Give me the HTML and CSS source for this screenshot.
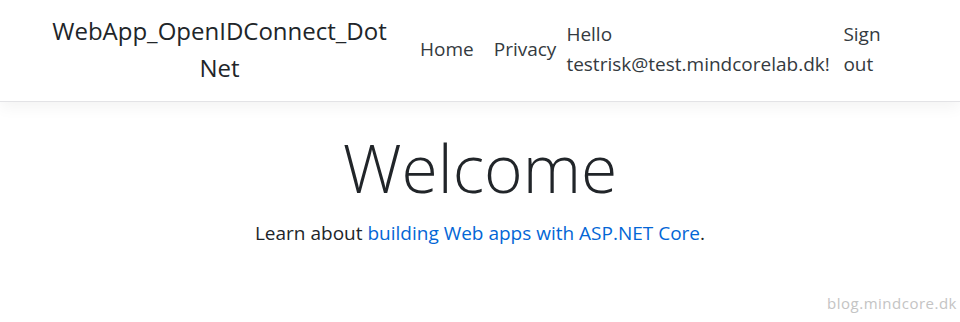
FILE: index.html
```html
<!DOCTYPE html>
<html lang="en">

<head>
    <meta charset="UTF-8">
    <meta name="viewport" content="width=device-width, initial-scale=1.0">
    <title>Home Page - WebApp_OpenIDConnect_DotNet</title>
    <link rel="stylesheet" href="styles.css">
</head>

<body>
    <header class="site-header">
        <nav class="navbar container">
            <a class="navbar-brand" href="#">WebApp_OpenIDConnect_Dot<wbr>Net</a>
            <ul class="navbar-nav nav-main">
                <li><a class="nav-link" href="#">Home</a></li>
                <li><a class="nav-link" href="#">Privacy</a></li>
            </ul>
            <ul class="navbar-nav nav-user">
                <li><span class="navbar-text">Hello testrisk@test.mindcorelab.dk!</span></li>
                <li><a class="nav-link sign-out" href="#">Sign out</a></li>
            </ul>
        </nav>
    </header>

    <main class="container">
        <div class="welcome">
            <h1 class="display-4">Welcome</h1>
            <p>Learn about <a href="#">building Web apps with ASP.NET Core</a>.</p>
        </div>
    </main>

    <div class="watermark">blog.mindcore.dk</div>
</body>

</html>
```

FILE: styles.css
```css
html,
body {
    margin: 0;
    padding: 0;
    height: 100%;
}

body {
    font-family: 'Segoe UI', 'Open Sans', sans-serif;
    font-size: 19px;
    line-height: 30px;
    color: #212529;
    background-color: #fff;
    overflow: hidden;
}

a {
    color: #0366d6;
    text-decoration: none;
}

.container {
    box-sizing: border-box;
    width: 900px;
    margin: 0 auto;
    padding: 0 19px;
}

.site-header {
    border-bottom: 1px solid #e3e3e6;
    box-shadow: 0 5px 15px rgba(0, 0, 0, 0.05);
}

.navbar {
    display: flex;
    align-items: center;
    height: 101px;
    padding-bottom: 4px;
}

.navbar-brand {
    width: 341px;
    flex-shrink: 0;
    margin-right: 20px;
    font-size: 24px;
    line-height: 37px;
    text-align: center;
    color: #212529;
}

.navbar-nav {
    display: flex;
    align-items: center;
    list-style: none;
    margin: 0;
    padding: 0;
}

.nav-link {
    display: block;
    padding: 0 10px;
    color: #343a40;
}

.nav-main {
    flex-shrink: 0;
}

.navbar-text {
    display: block;
    width: 263px;
    color: #343a40;
}

.sign-out {
    width: 40px;
    margin-left: 4px;
}

.welcome {
    text-align: center;
    padding-top: 25px;
}

.display-4 {
    margin: 0 0 11px;
    font-size: 66px;
    font-weight: 300;
    line-height: 80px;
}

.welcome p {
    margin: 0;
}

.watermark {
    position: absolute;
    right: 3px;
    bottom: 4px;
    font-size: 15px;
    color: #c4c4c4;
    letter-spacing: 0.5px;
}
```
